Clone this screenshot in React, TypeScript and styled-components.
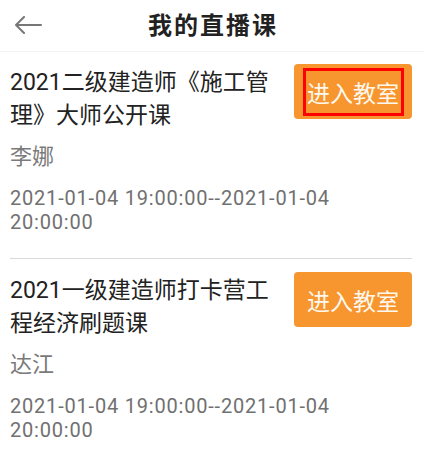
import React from "react";
import styled, { createGlobalStyle, css } from "styled-components";

const GlobalStyle = createGlobalStyle`
  html, body {
    margin: 0;
    padding: 0;
    background: #fff;
  }

  body {
    font-family: Roboto, "Noto Sans CJK SC", sans-serif;
    color: #222;
  }
`;

type Course = {
  title: string;
  teacher: string;
  start: string;
  end: string;
  highlighted?: boolean;
};

const courses: Course[] = [
  {
    title: "2021二级建造师《施工管理》大师公开课",
    teacher: "李娜",
    start: "2021-01-04 19:00:00",
    end: "2021-01-04 20:00:00",
    highlighted: true,
  },
  {
    title: "2021一级建造师打卡营工程经济刷题课",
    teacher: "达江",
    start: "2021-01-04 19:00:00",
    end: "2021-01-04 20:00:00",
  },
];

const App = () => {
  return (
    <Page>
      <GlobalStyle />

      <Header>
        <BackButton aria-label="返回">
          <svg width="28" height="18" viewBox="0 0 28 18" fill="none">
            <path
              d="M27 9H2M10 1L2 9l8 8"
              stroke="#777"
              strokeWidth="2"
              strokeLinecap="round"
              strokeLinejoin="round"
            />
          </svg>
        </BackButton>
        <Title>我的直播课</Title>
      </Header>

      <List>
        {courses.map((course, index) => (
          <Card key={index}>
            <Row>
              <CourseTitle>{course.title}</CourseTitle>
              <EnterButton>
                <ButtonLabel $outlined={course.highlighted}>进入教室</ButtonLabel>
              </EnterButton>
            </Row>

            <Teacher>{course.teacher}</Teacher>

            <Time>{`${course.start}--${course.end}`}</Time>
          </Card>
        ))}
      </List>
    </Page>
  );
};

export default App;

const Page = styled.div`
  width: 424px;
  min-height: 462px;
  background: #fff;
`;

const Header = styled.header`
  position: relative;
  height: 51px;
  display: flex;
  align-items: center;
  justify-content: center;
  border-bottom: 1px solid #f3f3f3;
`;

const BackButton = styled.button`
  position: absolute;
  left: 14px;
  top: 16px;
  padding: 0;
  border: 0;
  background: none;
  display: flex;
`;

const Title = styled.h1`
  margin: 0 0 0 2px;
  font-size: 24px;
  font-weight: 700;
  letter-spacing: 2px;
  color: #222;
  line-height: 1;
`;

const List = styled.div`
  padding: 0 12px 0 10px;
`;

const Card = styled.div`
  padding: 12px 0 24px;

  &:not(:last-child) {
    border-bottom: 1px solid #d9d9d9;
  }

  & + & {
    padding-top: 13px;
  }
`;

const Row = styled.div`
  display: flex;
  align-items: flex-start;
  justify-content: space-between;
`;

const CourseTitle = styled.div`
  width: 272px;
  margin-top: 2px;
  font-size: 23px;
  line-height: 33px;
  color: #222;
`;

const EnterButton = styled.button`
  flex: 0 0 118px;
  height: 55px;
  padding: 0;
  border: 0;
  border-radius: 4px;
  background: #f7962f;
  display: flex;
  align-items: center;
  justify-content: center;
  cursor: pointer;
`;

const ButtonLabel = styled.span<{ $outlined?: boolean }>`
  box-sizing: border-box;
  width: 101px;
  height: 48px;
  display: flex;
  align-items: center;
  justify-content: center;
  font-family: Roboto, "Noto Sans CJK SC", sans-serif;
  font-size: 23px;
  color: #fff8ee;
  white-space: nowrap;

  ${({ $outlined }) =>
    $outlined &&
    css`
      border: 3px solid #f00;
    `}
`;

const Teacher = styled.div`
  margin-top: 10px;
  font-size: 22px;
  line-height: 30px;
  color: #7a7a7a;
`;

const Time = styled.div`
  margin-top: 14px;
  width: 340px;
  font-family: Roboto, sans-serif;
  font-size: 20px;
  letter-spacing: 0.8px;
  line-height: 24px;
  color: #707070;
`;
